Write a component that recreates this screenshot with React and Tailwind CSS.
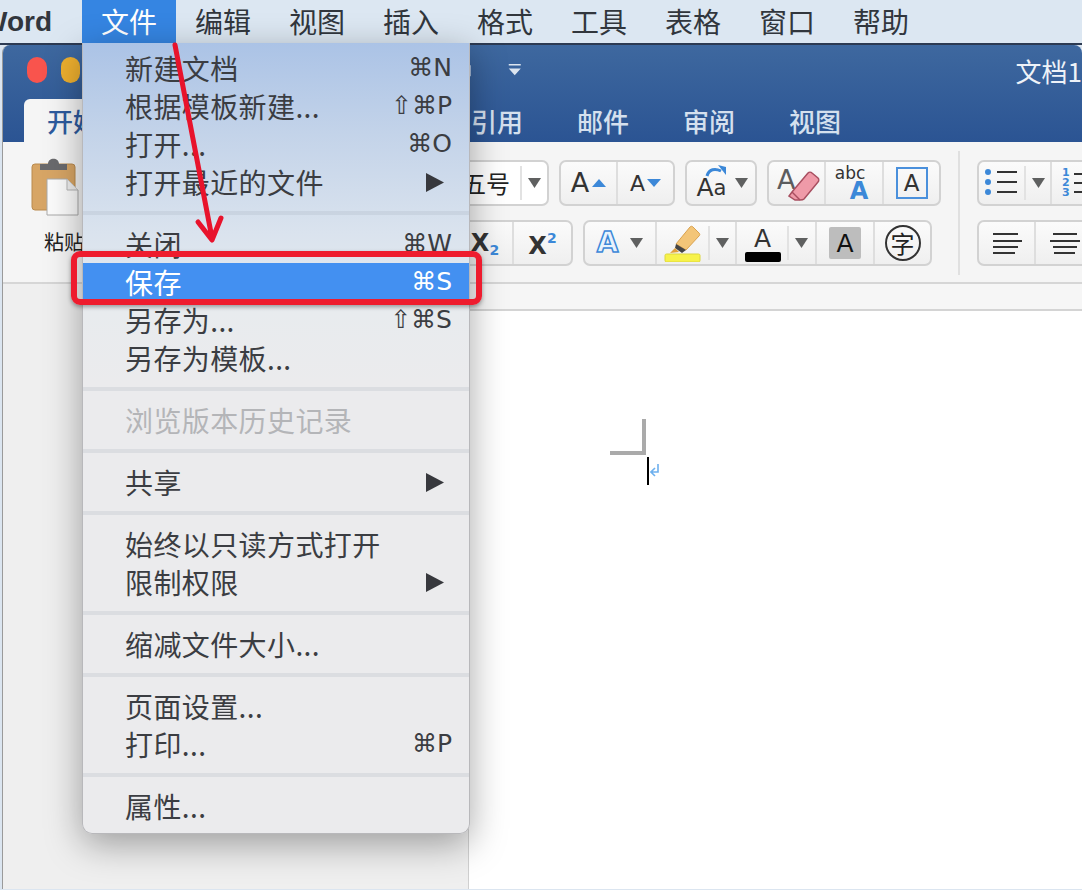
import React from "react";

const CJK = "font-['Noto_Sans_CJK_SC','Liberation_Sans',sans-serif]";

function Tri({ className = "" }) {
  return (
    <svg width="13" height="10" viewBox="0 0 13 10" className={className}>
      <path d="M0 0H13L6.5 10Z" fill="#5f6060" />
    </svg>
  );
}

function Group({ children, className = "" }) {
  return (
    <div className={`flex h-[46px] shrink-0 rounded-[7px] border-2 border-[#d2d2d2] bg-[linear-gradient(#fbfbfb,#efefef)] ${className}`}>
      {children}
    </div>
  );
}

function Cell({ children, className = "", last = false }) {
  return (
    <div className={`flex shrink-0 items-center justify-center ${last ? "" : "border-r-2 border-[#dedede]"} ${className}`}>
      {children}
    </div>
  );
}

const menuSections = [
  [
    ["新建文档", "⌘N"],
    ["根据模板新建...", "⇧⌘P"],
    ["打开...", "⌘O"],
    ["打开最近的文件", ">"],
  ],
  [
    ["关闭", "⌘W"],
    ["保存", "⌘S", "on"],
    ["另存为...", "⇧⌘S"],
    ["另存为模板..."],
  ],
  [["浏览版本历史记录", "", "off"]],
  [["共享", ">"]],
  [
    ["始终以只读方式打开"],
    ["限制权限", ">"],
  ],
  [["缩减文件大小..."]],
  [
    ["页面设置..."],
    ["打印...", "⌘P"],
  ],
  [["属性..."]],
];

function MenuRow({ label, key2, state }) {
  const on = state === "on";
  const off = state === "off";
  return (
    <div
      className={`flex h-[38px] items-center justify-between pl-[42px] pr-[17px] text-[28px] leading-[38px] tracking-[0.4px] ${
        on ? "bg-[#4390f1] text-white" : off ? "text-[#b4b5b8]" : "text-[#3b3d42]"
      }`}
    >
      <span>{label}</span>
      {key2 === ">" ? (
        <svg width="18" height="19" viewBox="0 0 18 19" className="mr-[8px]">
          <path d="M0 0L18 9.5L0 19Z" fill="#37383d" />
        </svg>
      ) : key2 ? (
        <span className="font-['DejaVu_Sans','Liberation_Sans',sans-serif] text-[25px] tracking-normal">{key2}</span>
      ) : null}
    </div>
  );
}

export default function App() {
  return (
    <div className={`relative h-[890px] w-[1082px] overflow-hidden bg-white ${CJK}`}>
      {/* Menu bar */}
      <div className="flex h-[43px] items-center bg-[#dce7f2] text-[28px] leading-[43px] text-[#31363d]">
        <div className="ml-[-19px] w-[101px] font-['Liberation_Sans',sans-serif] text-[28px] font-bold">Word</div>
        {["文件", "编辑", "视图", "插入", "格式", "工具", "表格", "窗口", "帮助"].map((t, i) => (
          <div key={t} className={`flex h-[43px] w-[94px] items-center justify-center ${i === 0 ? "bg-[#3585e2] text-white" : ""}`}>
            {t}
          </div>
        ))}
      </div>

      {/* Word window */}
      <div className="h-[847px] border-t-2 border-[#2c3a52] bg-[#dbe5f0]">
        <div className="ml-[2px] overflow-hidden rounded-t-[8px] border-l border-[#9a9a9a]">
          {/* Title bar */}
          <div className="h-[97px] bg-[linear-gradient(#3e689f,#2b5493)]">
            <div className="flex h-[50px] items-center pl-[24px]">
              <div className="h-[26px] w-[26px] rounded-full bg-[#f9544d]" />
              <div className="ml-[14px] h-[26px] w-[26px] rounded-full bg-[#efb02f]" />
              <svg width="28" height="28" viewBox="0 0 28 28" className="ml-[371px]">
                <path d="M6 9V2H20V9M6 21H1V9H25V21H20M6 17H20V26H6Z" fill="none" stroke="#d9e3f0" strokeWidth="2.4" />
              </svg>
              <svg width="18" height="16" viewBox="0 0 18 16" className="ml-[36px]">
                <path d="M1 0H17V2H1ZM1 6H17L9 15Z" fill="#dce5f0" />
              </svg>
              <div className="ml-[494px] whitespace-nowrap text-[26px] text-[#eef2f8]">文档1</div>
            </div>
            <div className="flex h-[47px] items-end gap-[8px] pl-[21px] text-[26px] font-medium leading-[43px] text-[#d5e0ee]">
              {["开始", "插入", "设计", "布局", "引用", "邮件", "审阅", "视图"].map((t, i) => (
                <div key={t} className={`h-[43px] px-[23px] ${i === 0 ? "rounded-t-[6px] bg-[#f5f5f5] text-[#2d5b9e]" : ""}`}>
                  {t}
                </div>
              ))}
            </div>
          </div>

          {/* Ribbon */}
          <div className="flex h-[142px] overflow-hidden border-b-2 border-[#d6d6d6] bg-[#f5f5f5]">
            <div className="w-[397px] shrink-0 pl-[28px] pt-[13px]">
              <svg width="50" height="62" viewBox="0 0 50 62">
                <rect x="1" y="9" width="43" height="46" rx="3" fill="#d7a565" stroke="#b98a4f" />
                <path d="M9 9H36V15H9Z M17 9C17 2 28 2 28 9Z" fill="#6a6a6d" />
                <path d="M16 24H36L47 35V60H16Z" fill="#fbfbfb" stroke="#a9a9a9" />
                <path d="M36 24V35H47" fill="#eeeeee" stroke="#b5b5b5" />
              </svg>
              <div className="ml-[13px] mt-[11px] text-[20px] leading-[28px] text-[#222]">粘贴</div>
            </div>
            <div className="flex w-[541px] shrink-0 flex-col gap-[14px] pt-[18px]">
              {/* Row 1 */}
              <div className="flex gap-[10px]">
                <div className="flex h-[46px] w-[149px] shrink-0 items-center justify-end rounded-[7px] border-2 border-[#d2d2d2] bg-white text-[24px] text-[#222]">
                  <span className="mr-[10px]">五号</span>
                  <div className="flex h-[34px] w-[27px] items-center justify-center border-l-2 border-[#e2e2e2]">
                    <Tri />
                  </div>
                </div>
                <Group>
                  <Cell className="w-[57px] gap-[3px]">
                    <span className="font-['DejaVu_Sans',sans-serif] text-[27px] text-[#333]">A</span>
                    <svg width="14" height="8" viewBox="0 0 14 8"><path d="M7 0L14 8H0Z" fill="#3c88d8" /></svg>
                  </Cell>
                  <Cell last className="w-[55px] gap-[2px]">
                    <span className="font-['DejaVu_Sans',sans-serif] text-[22px] text-[#333]">A</span>
                    <svg width="14" height="8" viewBox="0 0 14 8"><path d="M0 0H14L7 8Z" fill="#3c88d8" /></svg>
                  </Cell>
                </Group>
                <Group className="w-[72px] items-center justify-center gap-[6px]">
                  <div className="relative flex h-[38px] w-[34px] items-end justify-center font-['DejaVu_Sans',sans-serif] leading-[28px] text-[#333]">
                    <span className="text-[25px]">A</span>
                    <span className="text-[21px]">a</span>
                    <svg width="24" height="14" viewBox="0 0 24 14" className="absolute right-[1px] top-0">
                      <path d="M3 12C5 5 11 4 17 7" fill="none" stroke="#3c88d8" strokeWidth="3" />
                      <path d="M14 1L22 3V11Z" fill="#3c88d8" />
                    </svg>
                  </div>
                  <Tri />
                </Group>
                <Group>
                  <Cell className="relative w-[57px]">
                    <span className="absolute left-[8px] top-[0px] font-['DejaVu_Sans',sans-serif] text-[27px] leading-[36px] text-[#5c5c5e]">A</span>
                    <svg width="34" height="34" viewBox="0 0 34 34" className="absolute left-[17px] top-[8px]">
                      <path d="M6 22L22 3C23 2 25 2 26 3L32 8C33 9 33 11 32 12L18 29C17 30 15 30 14 30H9L3 26Z" fill="#ef9aa8" stroke="#a84f60" strokeWidth="1.5" />
                      <path d="M6 22L14 30" stroke="#a84f60" strokeWidth="1.5" />
                    </svg>
                  </Cell>
                  <Cell className="w-[58px] flex-col leading-none">
                    <span className="-ml-[8px] mt-[1px] font-['DejaVu_Sans',sans-serif] text-[17px] text-[#333]">abc</span>
                    <span className="ml-[10px] -mt-[3px] font-['DejaVu_Sans',sans-serif] text-[24px] font-bold text-[#3c88d8]">A</span>
                  </Cell>
                  <Cell last className="w-[55px]">
                    <div className="flex h-[32px] w-[32px] items-center justify-center border-2 border-[#4a90dc] font-['DejaVu_Sans',sans-serif] text-[23px] leading-none text-[#333]">A</div>
                  </Cell>
                </Group>
              </div>
              {/* Row 2 */}
              <div className="flex gap-[10px]">
                <Group className="w-[173px] justify-end">
                  <Cell className="w-[56px] items-baseline font-['DejaVu_Sans',sans-serif] text-[#333]">
                    <span className="text-[24px] font-bold leading-none">X</span>
                    <span className="mt-[14px] text-[14px] font-bold leading-none text-[#3c88d8]">2</span>
                  </Cell>
                  <Cell last className="w-[57px] font-['DejaVu_Sans',sans-serif] text-[#333]">
                    <span className="mt-[6px] text-[24px] font-bold leading-none">X</span>
                    <span className="-mt-[10px] text-[14px] font-bold leading-none text-[#3c88d8]">2</span>
                  </Cell>
                </Group>
                <Group>
                  <Cell className="w-[72px] gap-[12px]">
                    <span className="font-['DejaVu_Sans',sans-serif] text-[28px] font-bold leading-none text-[#e8f3fd] [-webkit-text-stroke:1.5px_#3c88d8]">A</span>
                    <Tri />
                  </Cell>
                  <Cell className="w-[80px] gap-[6px]">
                    <svg width="38" height="38" viewBox="0 0 38 38">
                      <path d="M12 20L26 3C27 2 28 2 29 3L35 9C36 10 36 11 35 12L22 26Z" fill="#f3c578" stroke="#d9a24f" />
                      <path d="M12 20L22 26L18 29L11 24Z" fill="#444" />
                      <path d="M11 24L15 28L6 29Z" fill="#e0a03a" />
                      <rect x="1" y="30" width="35" height="8" rx="1.5" fill="#f7f24a" stroke="#dcd63c" />
                    </svg>
                    <div className="flex h-[34px] items-center border-l-2 border-[#e2e2e2] pl-[6px]"><Tri /></div>
                  </Cell>
                  <Cell className="w-[80px] gap-[6px]">
                    <div className="flex w-[36px] flex-col items-center">
                      <span className="font-['DejaVu_Sans',sans-serif] text-[25px] leading-[27px] text-[#333]">A</span>
                      <div className="h-[10px] w-[36px] rounded-[2px] bg-black" />
                    </div>
                    <div className="flex h-[34px] items-center border-l-2 border-[#e2e2e2] pl-[6px]"><Tri /></div>
                  </Cell>
                  <Cell className="w-[58px]">
                    <div className="flex h-[32px] w-[32px] items-center justify-center rounded-[2px] bg-[#bdbdbd] font-['DejaVu_Sans',sans-serif] text-[25px] leading-none text-[#111]">A</div>
                  </Cell>
                  <Cell last className="w-[55px]">
                    <div className="flex h-[36px] w-[36px] items-center justify-center rounded-full border-2 border-[#333] text-[24px] leading-none text-[#222]">字</div>
                  </Cell>
                </Group>
              </div>
            </div>
            <div className="ml-[17px] mr-[17px] mt-[9px] h-[124px] w-[2px] shrink-0 bg-[#e0e0e0]" />
            <div className="flex shrink-0 flex-col gap-[14px] pt-[18px]">
              <Group className="w-[160px]">
                <Cell className="w-[73px] gap-[6px]">
                  <svg width="34" height="30" viewBox="0 0 34 30">
                    <circle cx="4" cy="4" r="3" fill="#3c88d8" />
                    <circle cx="4" cy="14" r="3" fill="#3c88d8" />
                    <circle cx="4" cy="24" r="3" fill="#3c88d8" />
                    <path d="M13 4H33M13 14H33M13 24H33" stroke="#333" strokeWidth="2" />
                  </svg>
                  <div className="flex h-[34px] items-center border-l-2 border-[#e2e2e2] pl-[6px]"><Tri /></div>
                </Cell>
                <Cell last className="w-[60px] justify-start gap-[4px] pl-[10px]">
                  <div className="flex flex-col text-[11px] font-bold leading-[10px] text-[#3c88d8] font-['DejaVu_Sans',sans-serif]">
                    <span>1</span><span>2</span><span>3</span>
                  </div>
                  <svg width="20" height="30" viewBox="0 0 20 30">
                    <path d="M0 6H20M0 15H20M0 24H20" stroke="#333" strokeWidth="2" />
                  </svg>
                </Cell>
              </Group>
              <Group className="w-[160px]">
                <Cell className="w-[57px]">
                  <svg width="30" height="22" viewBox="0 0 30 22">
                    <path d="M1 2H26M1 9H30M1 15H26M1 21H23" stroke="#333" strokeWidth="2" />
                  </svg>
                </Cell>
                <Cell last className="w-[57px]">
                  <svg width="30" height="22" viewBox="0 0 30 22">
                    <path d="M3 2H27M0 9H30M3 15H27M4 21H25" stroke="#333" strokeWidth="2" />
                  </svg>
                </Cell>
              </Group>
            </div>
          </div>

          {/* Document area */}
          <div className="flex h-[605px]">
            <div className="w-[465px] shrink-0 bg-[#efefef]" />
            <div className="relative flex-1 border-l border-[#d0d0d0] bg-white">
              <div className="h-[27px] border-b-2 border-[#d4d4d4] bg-[#f6f6f6]" />
              <div className="absolute left-[141px] top-[135px] h-[36px] w-[36px] border-b-4 border-r-4 border-[#aaaaaa]" />
              <div className="absolute left-[178px] top-[173px] h-[28px] w-[2px] bg-black" />
              <svg width="10" height="14" viewBox="0 0 10 14" className="absolute left-[181px] top-[179px]">
                <path d="M8 1V9H2M5 5L1 9L5 13" fill="none" stroke="#6db0ee" strokeWidth="1.6" />
              </svg>
            </div>
          </div>
        </div>
      </div>

      {/* Drop-down menu */}
      <div className="absolute left-[82px] top-[43px] w-[388px] rounded-b-[10px] border-x border-b border-[#b8b8bb] bg-[linear-gradient(#abc3e6_0px,#c3d3e9_90px,#dae3ee_190px,#e8ebee_270px,#ebebed_340px)] pb-[8px] pt-[6px] shadow-[0_10px_36px_rgba(0,0,0,0.35)]">
        {menuSections.map((rows, i) => (
          <div key={i}>
            {i > 0 && (
              <div className="flex h-[24px] items-center">
                <div className="h-[4px] w-full bg-[#9aa5b5]/20" />
              </div>
            )}
            {rows.map(([label, key2, state]) => (
              <MenuRow key={label} label={label} key2={key2} state={state} />
            ))}
          </div>
        ))}
      </div>

      {/* Red annotation */}
      <div className="absolute left-[71px] top-[251px] h-[54px] w-[411px] rounded-[9px] border-[6px] border-[#ee1c2e] shadow-[0_2px_4px_rgba(0,0,0,0.35)]" />
      <svg width="70" height="210" viewBox="0 0 70 210" className="absolute left-[165px] top-[40px]">
        <path d="M10 5L47 198M33 182L47 200L56 178" fill="none" stroke="#e8132c" strokeWidth="5" strokeLinecap="round" strokeLinejoin="round" />
      </svg>
    </div>
  );
}
